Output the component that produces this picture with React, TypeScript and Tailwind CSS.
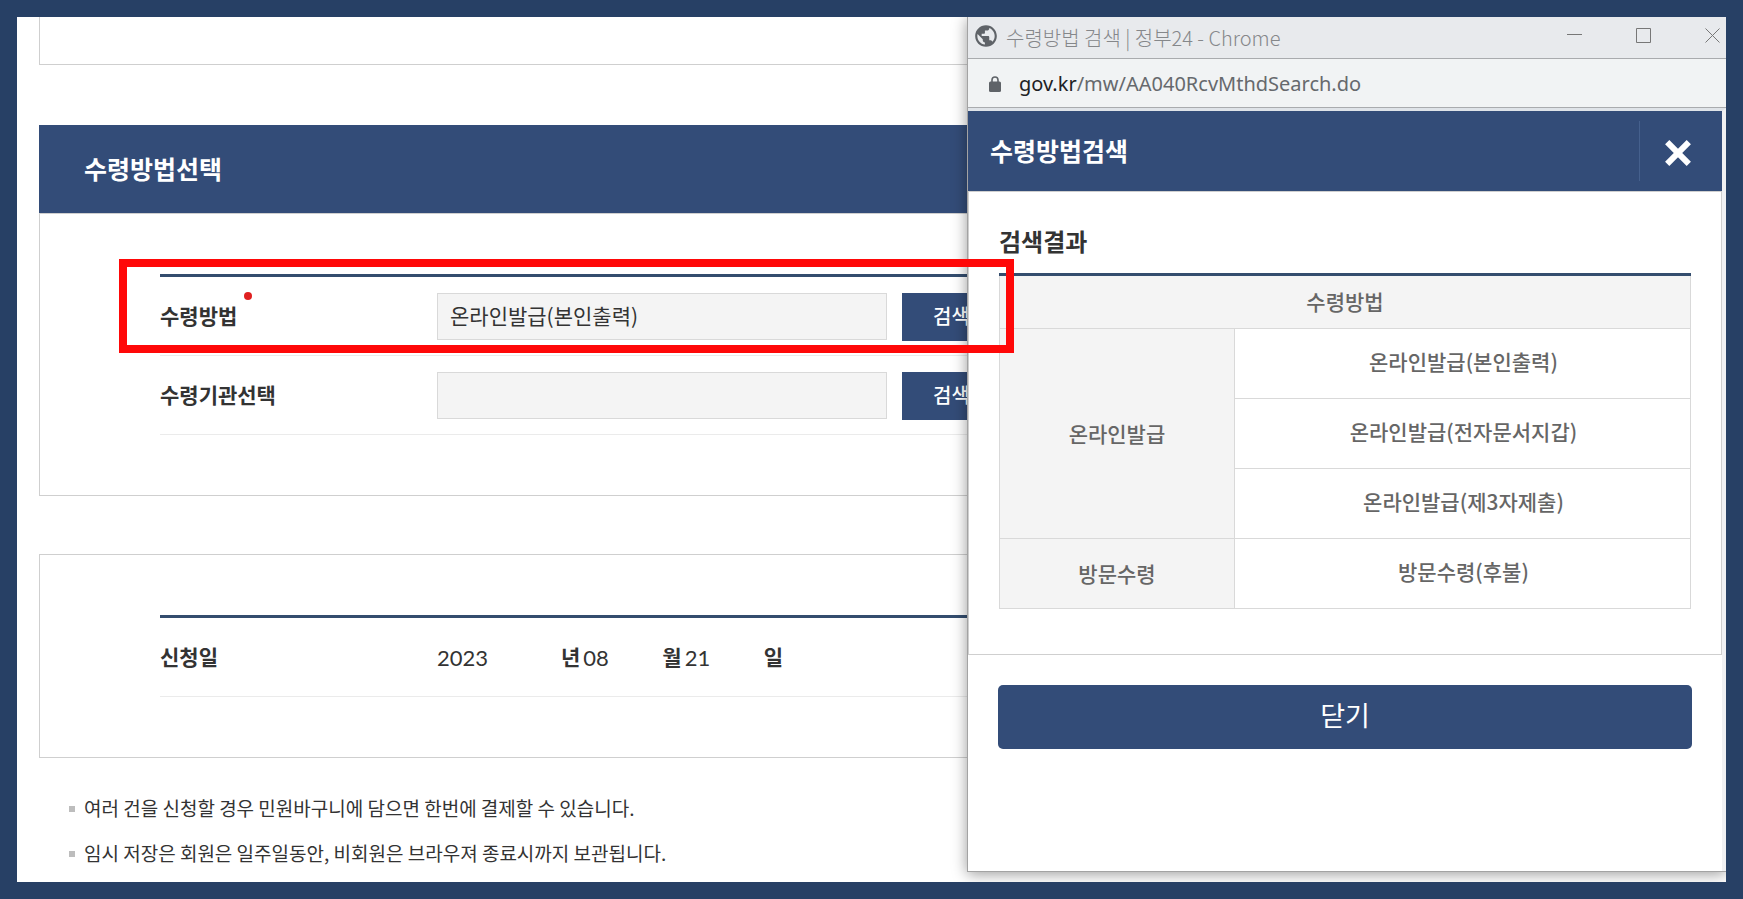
import React from "react";
import { MdPublic } from "react-icons/md";

const KR = "font-['Noto_Sans_CJK_KR',sans-serif]";

function FormRow({ id, label, value, required }: { id: string; label: string; value: string; required?: boolean }) {
  return (
    <div className="flex items-start border-b border-[#ebebeb] pt-4 pb-[14px]">
      <label htmlFor={id} className="flex h-[46px] w-[277px] shrink-0 items-center text-[21px] font-bold text-[#333]">
        <span>{label}</span>
        {required && <span className="mb-10 ml-[7px] size-2 rounded-full bg-[#e02020]" />}
      </label>
      <input
        id={id}
        readOnly
        value={value}
        className="h-[47px] w-[450px] shrink-0 border border-[#d9d9d9] bg-[#f4f4f4] px-3 pb-1 text-[21px] text-[#333] outline-none"
      />
      <button type="button" className="ml-[15px] h-12 shrink-0 bg-[#334c78] px-[31px] pb-[2px] text-[20px] font-medium text-white">
        검색
      </button>
    </div>
  );
}

function DatePart({ label, value, width }: { label: string; value: string; width: string }) {
  return (
    <label className="flex items-center text-[21px] font-bold text-[#333]">
      <input readOnly value={value} className={`${width} bg-transparent font-['Lato',sans-serif] text-[22px] font-normal outline-none`} />
      <span>{label}</span>
    </label>
  );
}

function LockIcon() {
  return (
    <svg viewBox="0 0 12 16" className="h-4 w-3 shrink-0" aria-hidden="true">
      <rect y="5.500" width="12" height="10.500" rx="1.500" fill="#5f6368" />
      <path d="M3 6V4a3 3 0 0 1 6 0v2" fill="none" stroke="#5f6368" strokeWidth="1.600" />
    </svg>
  );
}

const methods = [
  { group: "온라인발급", items: ["온라인발급(본인출력)", "온라인발급(전자문서지갑)", "온라인발급(제3자제출)"] },
  { group: "방문수령", items: ["방문수령(후불)"] },
];

const notes = [
  "여러 건을 신청할 경우 민원바구니에 담으면 한번에 결제할 수 있습니다.",
  "임시 저장은 회원은 일주일동안, 비회원은 브라우져 종료시까지 보관됩니다.",
];

function ApplicationPage() {
  return (
    <main className="min-w-0 flex-1 px-[22px]">
      <div className="h-12 border-x border-b border-[#cfcfcf]" />
      <section className="mt-[60px]">
        <h2 className="flex h-[88px] items-center bg-[#334c78] px-[45px] text-[25px] font-bold text-white">수령방법선택</h2>
        <div className="border border-[#cfcfcf] px-[120px] py-[60px]">
          <div className="border-t-3 border-[#344d6e]">
            <FormRow id="method" label="수령방법" value="온라인발급(본인출력)" required />
            <FormRow id="agency" label="수령기관선택" value="" />
          </div>
        </div>
      </section>
      <section className="mt-[58px] border border-[#cfcfcf] px-[120px] py-[60px]">
        <div className="flex h-[82px] items-center border-t-3 border-b border-t-[#344d6e] border-b-[#ebebeb]">
          <span className="w-[277px] text-[21px] font-bold text-[#333]">신청일</span>
          <div className="flex gap-[3px]">
            <DatePart label="년" value="2023" width="w-[124px]" />
            <DatePart label="월" value="08" width="w-[79px]" />
            <DatePart label="일" value="21" width="w-[79px]" />
          </div>
        </div>
      </section>
      <ul className="mt-7 pl-[30px]">
        {notes.map((note) => (
          <li key={note} className="flex h-[45px] items-center gap-[9px] text-[19px] text-[#333]">
            <span className="size-[6px] bg-[#bdbdbd]" />
            {note}
          </li>
        ))}
      </ul>
    </main>
  );
}

function WindowControls() {
  return (
    <div className="flex items-center gap-[54px] pr-[6px] pb-1 text-[#777]">
      <button type="button" aria-label="최소화">
        <svg viewBox="0 0 15 15" className="size-[15px]" stroke="currentColor" fill="none"><path d="M0 6.500h15" /></svg>
      </button>
      <button type="button" aria-label="최대화">
        <svg viewBox="0 0 15 15" className="size-[15px]" stroke="currentColor" fill="none"><path d="M.5.500h14v14H.5z" /></svg>
      </button>
      <button type="button" aria-label="창 닫기">
        <svg viewBox="0 0 15 15" className="size-[15px]" stroke="currentColor" fill="none"><path d="m.5.500 14 14m0-14-14 14" /></svg>
      </button>
    </div>
  );
}

function SearchWindow() {
  return (
    <aside className="absolute top-0 right-0 bottom-[10px] flex w-[759px] flex-col border-b border-l border-[#a3a3a3] bg-white shadow-[0_2px_14px_rgba(0,0,0,0.4)]">
      <div className="flex h-[42px] items-center justify-between border-b border-[#a9abae] bg-[#e8eaed] pl-[5px]">
        <div className="flex items-center gap-[7px] text-[20px] font-light text-[#85878a]">
          <MdPublic className="mb-1 size-[26px] text-[#5f6368]" />
          <span>수령방법 검색 | 정부24 - Chrome</span>
        </div>
        <WindowControls />
      </div>
      <div className="flex h-[49px] items-center gap-[18px] border-b border-[#a9abae] bg-[#f1f3f4] pt-[2px] pl-[21px] font-['Noto_Sans',sans-serif] text-[20px] text-[#66696d]">
        <LockIcon />
        <span>
          <span className="text-[#202124]">gov.kr</span>/mw/AA040RcvMthdSearch.do
        </span>
      </div>
      <div className="flex-1 border-t-3 border-r-4 border-t-[#dfe3e8] border-r-[#f0f1f3]">
        <header className="flex h-20 items-center justify-between bg-[#334c78] pl-[22px] text-white">
          <h1 className="text-[25px] font-bold">수령방법검색</h1>
          <button type="button" aria-label="닫기" className="flex h-[60px] w-[83px] items-center border-l border-[#45608d] pt-1 pl-[25px]">
            <svg viewBox="0 0 26 26" className="size-[26px]" fill="none" stroke="currentColor" strokeWidth="6">
              <path d="m2.200 2.200 21.600 21.600m0-21.600L2.200 23.800" />
            </svg>
          </button>
        </header>
        <section className="border border-[#cfcfcf] px-[30px] pt-[31px] pb-[45px]">
          <h2 className="h-[50px] text-[24px] leading-9 font-bold text-[#333]">검색결과</h2>
          <table className="w-full table-fixed border-collapse border-t-3 border-[#344d6e] text-center text-[21px] text-[#666]">
            <colgroup>
              <col className="w-[34%]" />
              <col />
            </colgroup>
            <thead>
              <tr className="h-[54px]">
                <th colSpan={2} scope="col" className="border-x border-b border-[#d9d9d9] bg-[#f4f4f4] font-medium">수령방법</th>
              </tr>
            </thead>
            <tbody>
              {methods.map(({ group, items }) =>
                items.map((item, i) => (
                  <tr key={item} className="h-[70px]">
                    {i === 0 && (
                      <th scope="row" rowSpan={items.length} className="border border-[#d9d9d9] bg-[#f4f4f4] font-medium">
                        {group}
                      </th>
                    )}
                    <td className="border border-[#d9d9d9] pb-[3px] pl-[2px] font-medium">{item}</td>
                  </tr>
                )),
              )}
            </tbody>
          </table>
        </section>
        <div className="mt-[30px] px-[30px]">
          <button type="button" className="h-16 w-full rounded-[5px] bg-[#334c78] pb-[3px] text-[27px] text-white">닫기</button>
        </div>
      </div>
    </aside>
  );
}

export default function App() {
  return (
    <div className={`${KR} flex min-h-screen bg-[#274065] p-[17px]`}>
      <div className="relative flex min-w-0 flex-1 overflow-hidden bg-white">
        <ApplicationPage />
        <SearchWindow />
        <div className="pointer-events-none absolute top-[242px] right-[712px] left-[102px] h-[94px] border-8 border-[#ff0808]" />
      </div>
    </div>
  );
}
